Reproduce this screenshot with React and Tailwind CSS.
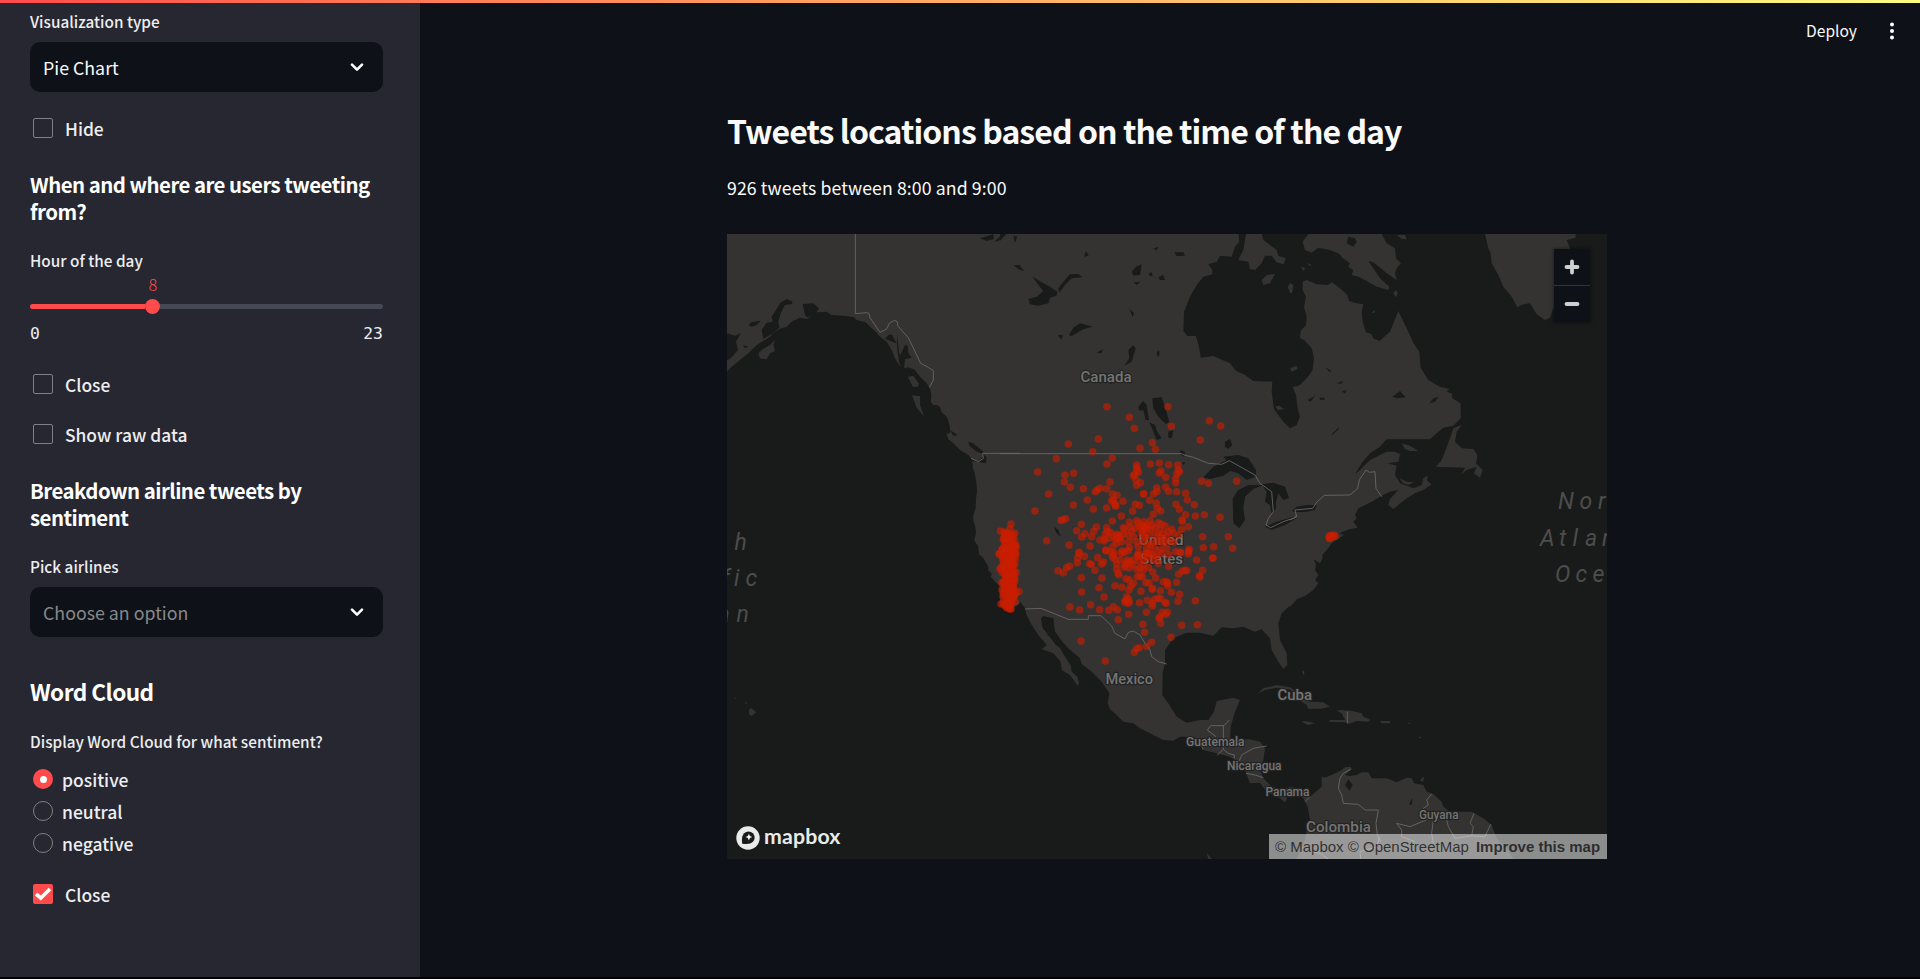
const SANS = "font-['Noto_Sans_CJK_SC',sans-serif]";

function Label({ children, className }) {
  return <div className={`h-5 text-[15.3px] leading-5 font-medium tracking-[0.02px] whitespace-nowrap ${className}`}>{children}</div>;
}

function Select({ children, muted, className }) {
  return (
    <div className={`flex h-[50px] items-center justify-between rounded-[10px] bg-[#0e1117] pr-[19px] pl-[13px] text-[17.8px] ${className}`}>
      <span className={muted ? "text-[#86888b]" : "text-[#fafafa]"}>{children}</span>
      <svg className="mt-[2px]" width="14" height="10" viewBox="0 0 14 10" fill="none" stroke="#fff" strokeWidth="2.6" strokeLinecap="round" strokeLinejoin="round">
        <path d="M2 1.6 7 6.6 12 1.6" />
      </svg>
    </div>
  );
}

function Checkbox({ children, checked, className }) {
  return (
    <label className={`flex h-5 items-center gap-3 pl-[3px] text-[17.4px] leading-5 font-medium ${className}`}>
      {checked ? (
        <span className="flex size-5 items-center justify-center rounded-[2px] bg-[#ff4b4b]">
          <svg width="18" height="14" viewBox="0 0 18 14" fill="none" stroke="#fff" strokeWidth="3.6">
            <path d="M2 7 6.8 11 16 2" />
          </svg>
        </span>
      ) : (
        <span className="size-5 rounded-[2px] border border-[#7f8085]" />
      )}
      <span className="pt-px">{children}</span>
    </label>
  );
}

function Radio({ children, checked }) {
  return (
    <label className="flex h-5 items-center gap-[9px] pl-[3px] text-[17.5px] leading-5 font-medium">
      {checked ? (
        <span className="flex size-5 items-center justify-center rounded-full bg-[#ff4b4b]">
          <span className="size-[7px] rounded-full bg-white" />
        </span>
      ) : (
        <span className="size-5 rounded-full border border-[#7f8085]" />
      )}
      <span className="pt-[2px]">{children}</span>
    </label>
  );
}

function Heading({ children, className }) {
  return <h3 className={`text-[20.4px] leading-[27px] font-bold tracking-[-0.52px] text-white ${className}`}>{children}</h3>;
}

function Sidebar() {
  return (
    <aside className="flex h-full w-[420px] shrink-0 flex-col bg-[#262730] px-[30px] pt-[11px] pr-[37px] text-[#eeeef0]">
      <Label>Visualization type</Label>
      <Select className="mt-[11px]">Pie Chart</Select>
      <Checkbox className="mt-[26px]">Hide</Checkbox>
      <Heading className="mt-[33px]">When and where are users tweeting from?</Heading>
      <Label className="mt-[25px]">Hour of the day</Label>
      <div className="mt-[4px] flex h-5 pl-[113px]">
        <span className="w-5 text-center text-[16.4px] leading-5 font-light text-[#ff4b4b]">8</span>
      </div>
      <div className="mt-[5px] flex h-[15px] items-center">
        <div className="h-[5px] w-[115px] rounded-l-full bg-[#ff4b4b]" />
        <div className="size-[15px] rounded-full bg-[#ff4b4b]" />
        <div className="h-[5px] flex-1 rounded-r-full bg-[#464853]" />
      </div>
      <div className="mt-[10px] flex h-5 justify-between font-['DejaVu_Sans_Mono',monospace] text-[16.4px] leading-5">
        <span>0</span>
        <span>23</span>
      </div>
      <Checkbox className="mt-[30px]">Close</Checkbox>
      <Checkbox className="mt-[30px]">Show raw data</Checkbox>
      <Heading className="mt-[33px]">Breakdown airline tweets by sentiment</Heading>
      <Label className="mt-[25px]">Pick airlines</Label>
      <Select className="mt-[11px]" muted>Choose an option</Select>
      <h2 className="mt-10 text-[22.6px] leading-[30px] font-bold tracking-[-0.55px] text-white">Word Cloud</h2>
      <Label className="mt-6">Display Word Cloud for what sentiment?</Label>
      <div className="mt-[18px] flex flex-col gap-3">
        <Radio checked>positive</Radio>
        <Radio>neutral</Radio>
        <Radio>negative</Radio>
      </div>
      <Checkbox className="mt-[31px]" checked>Close</Checkbox>
    </aside>
  );
}

// The map is split in six regions, each with an origin and a 1/3 px unit.
const TILES = {
  nw: "translate(720 225) scale(.33333)",
  n: "translate(1000 225) scale(.33333)",
  ne: "translate(1290 225) scale(.33333)",
  sw: "translate(720 540) scale(.33333)",
  s: "translate(1000 540) scale(.33333)",
  se: "translate(1290 540) scale(.33333)",
};

const LAND = {
  nw: "M21 27H900V990H777L775 960 763 945 768 925 766 905 760 885V870L767 850 768 820 771 800 769 770 764 745 758 725 757 705 745 690 720 675 700 655 685 643 679 627 690 624V610L686 590 680 575 665 562 660 545 650 540 640 540 632 530 634 512 628 488 610 485 600 460 580 432 553 428 540 425 525 400 515 375 500 350 480 335 465 318 450 305 437 292 410 285 400 276 370 272 335 270 318 260 300 262 285 262 262 282 240 278 215 290 200 305 178 312 158 325 150 335 135 345 110 360 85 385 60 405 35 425 21 440Z M115 385 125 375 150 360 165 345 160 360 165 378 150 385 140 403 120 400Z M576 511 600 514 600 540 613 575 590 548Z M563 455 580 452 597 475 594 485 578 485 570 468Z",
  n: "M0 27H870V990H0Z",
  ne: "M0 610 20 600 30 575 22 545 18 510 8 487 30 480 50 460 68 435 72 400 65 370 45 348 30 338 32 318 48 300 50 275 42 245 48 215 38 195 38 170 50 165 80 178 115 180 125 172 150 190 172 210 177 228 200 235 220 238 215 260 218 290 228 322 245 328 250 340 268 348 300 320 312 290 325 258 345 300 362 335 370 355 388 380 392 428 415 465 450 485 478 492 470 500 485 505 487 520 512 535V580L490 602 460 608 440 625 420 643 290 643 270 665 240 685 215 715 195 748 210 735 240 705 290 680 315 680 330 688 325 710 292 715 320 722 315 750 330 775 370 790 395 780 400 760 412 752V768L425 778 400 795 375 805 350 820 325 840 310 852 295 840 300 822 325 795 300 800 275 812 245 830 205 850 195 870 200 880 190 890 203 908 180 912 148 925 162 930 125 955 110 975 97 990H0Z M55 27 38 50 45 75 65 83 85 68 120 75 150 88 155 97 180 115 175 125 190 135 185 150 205 155 230 168 260 185 295 195 298 185 270 160 250 130 235 108 250 112 290 145 320 165 315 145 320 130 333 115 318 100 315 70 290 55 275 27Z M32 125 47 130 40 137Z M52 113 65 120 58 124Z M0 175 10 180 6 203 0 205Z M585 27H857V38L830 45 840 70 842 200 790 250 780 278 765 285 740 268 720 235 700 238 682 247 665 215 640 185 625 150 605 115 602 85 595 70Z M515 600 500 620 495 650 515 670 550 672 562 690 558 715 578 735 570 758 552 745 560 725 530 735 515 748 525 728 438 725 455 705 465 680 480 640 490 610Z M335 655 360 662 385 678 360 678 345 672Z M328 758 350 770 372 772 355 780 340 775Z M310 205 318 195 323 205 318 217Z M245 265 252 255 255 262Z M320 30 345 30 350 43 335 42Z",
  sw: "M762 0 775 20 778 42 790 55 805 80 805 92 815 100 813 112 838 138 840 180 880 205 900 190V0Z M87 508 95 505 108 517 95 528 87 523Z M72 486 82 488 80 492Z M42 471 48 473 46 477Z",
  s: "M0 0V200H45L57 180 75 205 80 225 92 250 115 285 140 315 125 328 160 340 182 365 185 390 210 405 233 437 237 430 232 410 215 395 213 378 195 350 180 325 165 312 145 285 128 265 123 235 130 228 160 235 165 275 178 295 205 325 240 355 245 372 275 395 305 425 328 460 323 490 330 508 350 525 370 545 400 550 420 565 460 585 490 600 520 602 540 590 560 590 600 610 610 630 650 640 690 650 715 665 735 690 750 730 780 728 800 755 840 775 855 787 862 775 850 765 870 750V740L850 750 815 740 790 715 780 690 790 660 795 625 780 605 745 597 715 603 690 600 692 560 705 515 720 480 700 473 650 483 642 515 625 540 600 540 560 548 530 530 505 490 487 465 488 400 495 370 495 330 520 295 560 278 600 278 640 287 665 262 700 265 730 260 765 275 785 268 810 295 815 330 835 365 850 387 862 375 860 340 840 300 835 250 845 220 872 195V0Z M772 462 790 445 830 435 870 442 872 449 830 443 795 450Z M620 940 630 950 635 957 625 957Z",
  se: "M0 0V201L20 178 45 168 70 150 85 130 75 120 85 105 75 90 78 75 72 58 90 70 98 55 95 35 110 30 123 10 125 0Z M0 440 30 465 60 485 100 487 120 500 95 506 55 506 50 495 20 475 0 448Z M140 512 150 510 185 512 215 520 220 530 242 540 235 545 200 543 175 552 168 547 118 545 120 540 165 540 155 520Z M37 543 60 545 75 550 55 555 42 550Z M270 543H300V550H275Z M355 548H361V552H355Z M387 590H393V594H387Z M35 395 42 392 43 407Z M0 742 30 745 55 772 60 770 95 740V712L108 712 130 703 155 690 165 682 182 680 185 688 165 705 180 708 200 705 215 697 235 697 245 715 290 715 320 727 350 713 365 715 372 730 400 735 410 755 430 762 455 785 460 800 480 815H545L580 835 605 855 620 895 650 925 670 957H20L45 900 50 870 60 840 53 800 40 775 0 755Z M390 722 397 712 402 712 400 725Z",
};

const WATER = {
  nw: "M158 290 155 275 168 255 180 235 200 222 218 230 215 237 195 240 183 262 175 290 178 308 158 325 130 342 125 315 140 293Z M21 325 45 332 62 325 48 350 54 375 30 402 21 405Z M85 300 95 292 122 287 110 300 95 305Z M68 360 85 365 75 369Z M248 237 280 235 297 250 290 262 262 278 255 270Z M530 320 537 380 552 430 540 425 532 375Z M555 360 563 362 565 385 575 398 555 402 552 430 543 420 541 390Z M495 342 530 355 515 328 505 330Z M560 425 585 435 600 455 620 475 630 490 634 512 610 512 600 480 575 445Z M690 615 713 630 700 633Z M745 650 760 655 790 680 788 686 770 680 748 662Z M750 700 775 708 788 695 788 684 800 698 798 715 780 712 757 708Z M780 40 820 28 822 42 800 48Z M822 50 850 27 858 30 835 48Z M882 35 890 32 888 52 882 45Z M882 123 900 120V133Z",
  n: "M715 27H870V610L850 590 822 552 815 500 817 470 760 468 735 450 708 437 690 415 640 393 602 398 598 370 588 333 562 333 550 318 552 260 570 215 590 180 610 155 637 148 637 135 625 118 650 110 660 92 695 95 705 65 718 50Z M98 155 125 172 150 185 172 200 170 212 150 218 145 235 115 242 90 238 85 222 110 215 130 198 115 180Z M175 190 190 170 210 148 235 147 248 157 215 160 195 180 178 203Z M42 120 60 122 72 138 55 133Z M40 32 50 35 45 52Z M252 95 258 78 266 92Z M460 70 475 66 470 76Z M522 82 550 82 555 92 530 93Z M395 140 408 125 425 118 420 150 400 152Z M400 172 422 170 410 180Z M445 147 455 142 458 152 450 154Z M475 157 490 150 495 165 480 165Z M388 250 402 265 398 277Z M207 330 220 308 240 295 278 305 250 313 215 333Z M173 330 188 330 185 345Z M290 383 308 373 305 385Z M385 375 400 360 407 370 395 410 373 422 388 400Z M470 380 478 376 478 392 472 395Z M457 520 485 517 495 545 508 590 498 597 475 575 460 550Z M415 545 430 528 440 540 447 585 437 585 430 555 418 557Z M448 592 465 600 472 620 485 640 470 645 458 615Z M505 620 520 615 515 640 505 638Z M675 650 690 642 697 660 685 672 675 665Z M610 757 640 725 680 705 670 695 715 690 745 700 768 735V755L740 765 715 745 690 738 670 752 630 762Z M698 820 715 795 745 780 790 780 760 792 735 815 730 850 735 885 718 910 700 895Z M785 778 820 773 855 785 867 820 850 825 835 805 828 830 828 850 815 868 810 840 795 830 800 800Z M795 905 830 890 880 875 890 880 855 900 815 915Z M162 905 175 915 182 935 168 922Z M540 675 555 680 553 695 543 690Z M0 27H18L0 48Z M325 473H335V478Z M545 714 555 710 552 720Z",
  ne: "M175 35 195 40 200 52 190 65 170 55Z M107 427 125 438 118 441Z M52 525 75 512 62 530Z M88 518 105 518 103 524H90Z M307 515 330 498 347 517 320 520Z M418 535 430 520 447 515 435 530Z M125 628 145 608 147 612 128 629Z M140 475 158 468 155 476Z M155 498 170 496 165 506Z M5 858 20 845 50 840 80 840 75 855 50 860 20 862Z",
  sw: "",
  s: "M140 285 165 275 180 295 165 295Z",
  se: "M165 735 175 718 188 735 178 752Z M357 792 368 773 365 795Z",
};

const ISLANDS = {
  n: "M738 27 785 27 790 45 830 75 835 92 858 100 850 118 830 112 815 92 795 92 785 115 765 135 750 132 745 110 715 105 730 75Z M785 165 800 150 825 147 810 175 790 180Z M863 185 870 175V203Z M825 545 838 542 852 552 835 556Z",
  ne: "M0 175 10 180 6 203 0 205Z M0 430 20 422 22 432 5 440Z",
};

const BORDERS = {
  nw: "M406 27V266L440 263 447 265 450 278 480 322 500 312 508 295 523 286 532 290 532 300 548 320 565 338 590 390 602 415 625 427 640 437V465L628 488 M753 700 775 710 790 700 788 685H900",
  n: "M0 686H545L552 690 580 697 600 705 625 715 665 718 688 707 765 750 780 775 815 800 820 860 805 880 798 900 812 908 850 890 885 878 890 870",
  ne: "M0 885 20 875 15 855 68 850 80 832 103 811 180 810 203 790 208 765 228 735 238 742 255 740 258 790 275 815",
  s: "M75 207 123 205 205 238H265V227H303L335 258 345 280 375 297 385 277 400 273 420 285 435 310 450 330 455 350 475 365 500 372 M648 590 622 570 632 557H672L688 540 M670 557V628L652 645 M670 628 685 640 703 645V655 M718 662 725 645 760 625 800 618 M738 700 765 705 790 713 M605 615 608 628",
  se: "M182 688 160 700 150 715 145 745 155 765 160 790 205 793 225 810 265 810 258 850 262 885 272 905 M425 762 410 780 415 795 400 805 410 820 408 840 360 860 320 850 335 870 335 890 375 905 M430 840 425 880 430 910 M470 840 475 860 495 895 545 888 550 860 540 850 552 820 M545 888 585 890 602 853 M172 515V550 M60 935 90 940 115 957 M212 957 210 935 262 920 268 890 M60 770 45 785",
};

const DOTS_N = [
  321,545, 504,545, 388,577, 403,610, 514,604, 628,587, 662,603, 601,645, 295,642, 205,657, 278,680, 420,670, 457,653, 466,673, 169,701, 337,699, 321,717, 113,741, 195,750, 221,745, 193,771, 211,787, 250,791, 146,807, 330,771, 320,791, 300,790, 292,795, 286,800, 262,825, 220,840, 280,852, 105,858, 140,947, 188,885, 197,881, 183,886,
  410,720, 410,728, 412,736, 415,742, 404,748, 400,753, 408,765, 421,773, 410,781, 451,717, 478,714, 506,719, 533,720, 535,735, 538,741, 530,748, 483,738, 478,744, 497,757, 527,762, 527,773, 604,769, 625,775, 710,769, 431,807, 431,807, 470,789, 471,800, 461,806, 497,787, 506,799, 530,800, 557,805, 562,825, 583,839,
  337,807, 351,811, 340,825, 335,827, 343,835, 347,840, 347,844, 369,829, 320,849, 406,838, 418,841, 398,858, 449,826, 469,835, 472,850, 482,858, 460,868, 528,838, 538,853, 557,869, 586,873, 613,869, 660,877, 546,885, 547,889, 565,905, 364,873, 337,888, 244,898, 230,917, 245,936, 255,926, 281,919, 289,906, 275,935, 207,960, 270,963, 608,935, 685,935, 610,968, 641,965, 698,970, 567,973, 566,978, 320,908, 316,927, 322,919, 300,945, 313,948, 312,942, 326,940, 330,922, 340,932, 350,928, 355,935, 345,944, 360,940, 370,928, 373,912, 370,908, 388,892, 390,905, 395,918, 410,887, 415,895, 405,910, 420,905, 430,890, 428,900, 435,908, 425,915, 440,912, 450,887, 455,900, 452,915, 465,908, 475,893, 484,898, 495,902, 478,915, 490,925, 505,920, 515,913, 520,925, 545,913, 535,930, 500,935, 480,935, 460,930, 440,930, 425,928, 400,935, 385,930, 365,950, 350,955, 338,965, 318,975, 342,983, 366,978, 388,968, 387,950, 410,950, 430,950, 415,965, 440,968, 455,955, 470,950, 490,955, 508,948, 520,952, 500,970, 480,975, 465,972, 527,980, 542,983, 237,982, 415,985, 445,985,
  436,937, 431,917, 450,962, 440,985, 476,928, 486,948, 460,990, 350,938, 358,930, 432,905, 442,900,
];

const DOTS_S = [
  237,40, 253,49, 233,53, 232,68, 269,71, 274,73, 209,79, 200,83, 174,92, 190,98, 285,91, 293,53, 305,72, 310,66, 244,113, 306,114, 245,156, 297,143, 312,171, 272,194, 210,201, 239,210, 299,209, 327,211, 340,200, 352,209, 345,137, 366,142, 317,32, 340,45, 338,52, 345,58, 330,35, 360,60, 350,72, 350,87, 354,99, 357,104, 372,82, 376,76, 378,68, 382,60, 390,65, 388,84, 398,74, 365,40, 373,37, 385,32, 400,60, 412,47, 415,47, 415,45, 417,64, 430,58, 442,52, 437,38, 410,88, 420,84, 430,75, 430,90, 445,82, 458,96, 412,110, 420,107, 428,111, 378,116, 387,119, 400,130, 393,138, 387,150, 423,154, 438,128, 447,128, 467,114, 490,125, 500,125, 503,130, 503,137, 530,127, 457,145, 457,148, 481,152, 514,157, 539,163, 534,184, 586,182, 380,170, 385,176, 376,182, 388,185, 375,187, 380,181, 385,190, 419,188, 442,181, 457,190, 457,198, 464,178, 475,175, 482,176, 495,187, 499,190, 386,223, 355,239, 439,217, 502,217, 487,217, 497,223, 480,230, 477,235, 482,250, 429,253, 434,277, 545,256, 592,254, 513,292, 455,307, 440,319, 418,323, 410,326, 403,337, 243,303, 316,363, 506,79, 536,103, 547,93, 555,91, 560,92, 598,107, 600,111, 608,91, 638,54, 639,55, 590,60, 566,35, 565,42, 540,37, 506,44, 485,40, 470,48, 460,60, 475,70, 450,40,
];

function noise(i) {
  const v = Math.sin(i * 127.1) * 43758.5453;
  return v - Math.floor(v);
}

// West coast column: dense rows of overlapping tweets.
const WEST = Array.from({ length: 360 }, (_, i) => {
  const y = 533 + noise(i + 3) * 72;
  const half = y > 597 ? 5 : 8;
  return [1008.7 + (noise(i + 900) + noise(i + 1700) - 1) * half, y];
});
const WEST_EXTRA = [
  1011, 524, 1010, 529, 1000.5, 531, 1004, 532, 1007, 533, 1000, 553.5, 999, 554, 1001, 568, 1000, 569, 1002, 590, 1001, 604, 1007, 608, 1010, 609, 1015, 602, 1019, 591.5, 1016, 545, 1016, 548, 1009, 608, 1008, 607, 1005, 606, 1011, 609, 1003, 603,
];
const EAST = [1329, 536, 1331, 536, 1334, 535, 1335, 536.5, 1330, 538, 1332, 537, 1333, 536, 1329.5, 538.5, 1331, 535.5];

function Dots({ list, r }) {
  const out = [];
  for (let i = 0; i < list.length; i += 2) out.push(<circle key={i} cx={list[i]} cy={list[i + 1]} r={r} />);
  return out;
}

function Paths({ data, ...rest }) {
  return <g {...rest}>{Object.keys(data).map((k) => <path key={k} transform={TILES[k]} d={data[k]} />)}</g>;
}

const PLACES = [
  ["Canada", 1080.5, 382, 51, 15.5],
  ["United", 1138.5, 545, 45, 15.5],
  ["States", 1140, 564, 43, 15.5],
  ["Mexico", 1105.5, 684, 47.5, 15.5],
  ["Cuba", 1277.5, 699.5, 34.5, 15.5],
  ["Guatemala", 1186, 746, 58.5, 12.5],
  ["Nicaragua", 1227, 770, 54.5, 12.5],
  ["Panama", 1265.5, 796, 44, 12.5],
  ["Colombia", 1306, 832, 65, 15.5],
  ["Guyana", 1419, 818.5, 39.5, 12.5],
];

const OCEAN = [
  ["Nor", [1558, 1579.5, 1598], 509],
  ["Atlan", [1540, 1559, 1572.5, 1585, 1602], 545.5],
  ["Oce", [1555, 1575.5, 1592.5], 581.5],
  ["h", [734.5], 549.5],
  ["fic", [722, 734, 745.5], 586],
  ["an", [717.5, 736.5], 622],
];

function TweetMap() {
  return (
    <div className="relative h-[625px] w-[880px] overflow-hidden bg-[#191a1a]">
      <svg className="block" width="880" height="625" viewBox="727 234 880 625">
        <Paths data={LAND} fill="#343332" />
        <Paths data={WATER} fill="#191a1a" />
        <Paths data={ISLANDS} fill="#343332" />
        <Paths data={BORDERS} fill="none" stroke="#6a6a69" strokeWidth="2.6" strokeLinejoin="round" />
        <g fontFamily="Roboto, sans-serif" fontWeight="500" fill="#757574" stroke="#232323" strokeWidth="2.4" strokeLinejoin="round" paintOrder="stroke">
          {PLACES.map(([name, x, y, w, size]) => (
            <text key={name} x={x} y={y} textLength={w} lengthAdjust="spacingAndGlyphs" fontSize={size}>{name}</text>
          ))}
        </g>
        <g fontFamily="Roboto, sans-serif" fontStyle="italic" fontSize="23" fill="#4d4d4c">
          {OCEAN.map(([t, xs, y]) => (
            <text key={t} x={xs.join(" ")} y={y}>{t}</text>
          ))}
        </g>
        <g fill="#c81e00" fillOpacity="0.63">
          <g transform={TILES.n}><Dots list={DOTS_N} r={11.3} /></g>
          <g transform={TILES.s}><Dots list={DOTS_S} r={11.3} /></g>
          {WEST.map(([x, y], i) => <circle key={i} cx={x} cy={y} r={3.8} />)}
          <Dots list={WEST_EXTRA} r={3.8} />
          <Dots list={EAST} r={3.8} />
        </g>
      </svg>
      <div className="absolute top-[15px] right-[17px] flex h-[73px] w-9 flex-col bg-[#0e1117] shadow-[0_0_3px_1px_rgba(0,0,0,0.35)]">
        <div className="flex flex-1 items-center justify-center border-b border-[#31333b]">
          <svg width="16" height="16" viewBox="0 0 16 16" stroke="#cfd1d0" strokeWidth="3.8" strokeLinecap="round"><path d="M2.5 8h11M8 2.5v11" /></svg>
        </div>
        <div className="flex flex-1 items-center justify-center">
          <svg width="16" height="16" viewBox="0 0 16 16" stroke="#cfd1d0" strokeWidth="3.8" strokeLinecap="round"><path d="M2.5 8h11" /></svg>
        </div>
      </div>
      <div className="absolute bottom-[9px] left-[9px] flex h-6 items-center gap-[4px]">
        <svg width="24" height="24" viewBox="0 0 24 24">
          <circle cx="12" cy="12" r="11.7" fill="#e9ebea" />
          <path d="M6.2 17.7C5.6 12.5 6 9.5 8.2 7.2a6.1 6.1 0 0 1 8.7 8.6c-2.3 2.3-5.6 2.5-10.7 1.9Z" fill="#191a1a" />
          <path d="m12.9 7.8 1 2.3 2.3 1-2.3 1-1 2.3-1-2.3-2.3-1 2.3-1Z" fill="#fff" />
        </svg>
        <span className="-mt-[5px] font-['Lato',sans-serif] text-[21.3px] leading-6 font-bold tracking-[0.15px] text-[#e9ebea]">mapbox</span>
      </div>
      <div className="absolute right-0 bottom-0 flex h-[25px] w-[338px] items-center gap-[7px] bg-white/50 pt-px pl-[6px] font-['Liberation_Sans',sans-serif] text-[15px] whitespace-nowrap text-black/70">
        <span>© Mapbox © OpenStreetMap</span>
        <span className="font-bold">Improve this map</span>
      </div>
    </div>
  );
}

export default function App() {
  return (
    <div className={`flex h-[979px] w-[1920px] flex-col overflow-hidden bg-black ${SANS}`}>
      <div className="relative flex h-[977px] bg-[#0e1117]">
        <Sidebar />
        <main className="flex flex-1 flex-col pl-[307px] text-[#fafafa]">
          <header className="-ml-[307px] flex h-[60px] items-center justify-end gap-[33px] pr-[26px]">
            <span className="text-[15.6px] leading-5">Deploy</span>
            <svg className="mt-px" width="4" height="18" viewBox="0 0 4 18" fill="#fff">
              <circle cx="2" cy="2.5" r="2" /><circle cx="2" cy="9" r="2" /><circle cx="2" cy="15.5" r="2" />
            </svg>
          </header>
          <h1 className="mt-[49px] text-[32px] leading-[42px] font-bold tracking-[-0.94px] whitespace-nowrap">Tweets locations based on the time of the day</h1>
          <p className="mt-[23px] mb-[34px] text-[17.7px] leading-[26px] tracking-[0.1px]">926 tweets between 8:00 and 9:00</p>
          <TweetMap />
        </main>
        <div className="absolute inset-x-0 top-0 h-[3px] bg-linear-to-r from-[#ff4b4b] to-[#fffd80]" />
      </div>
    </div>
  );
}
